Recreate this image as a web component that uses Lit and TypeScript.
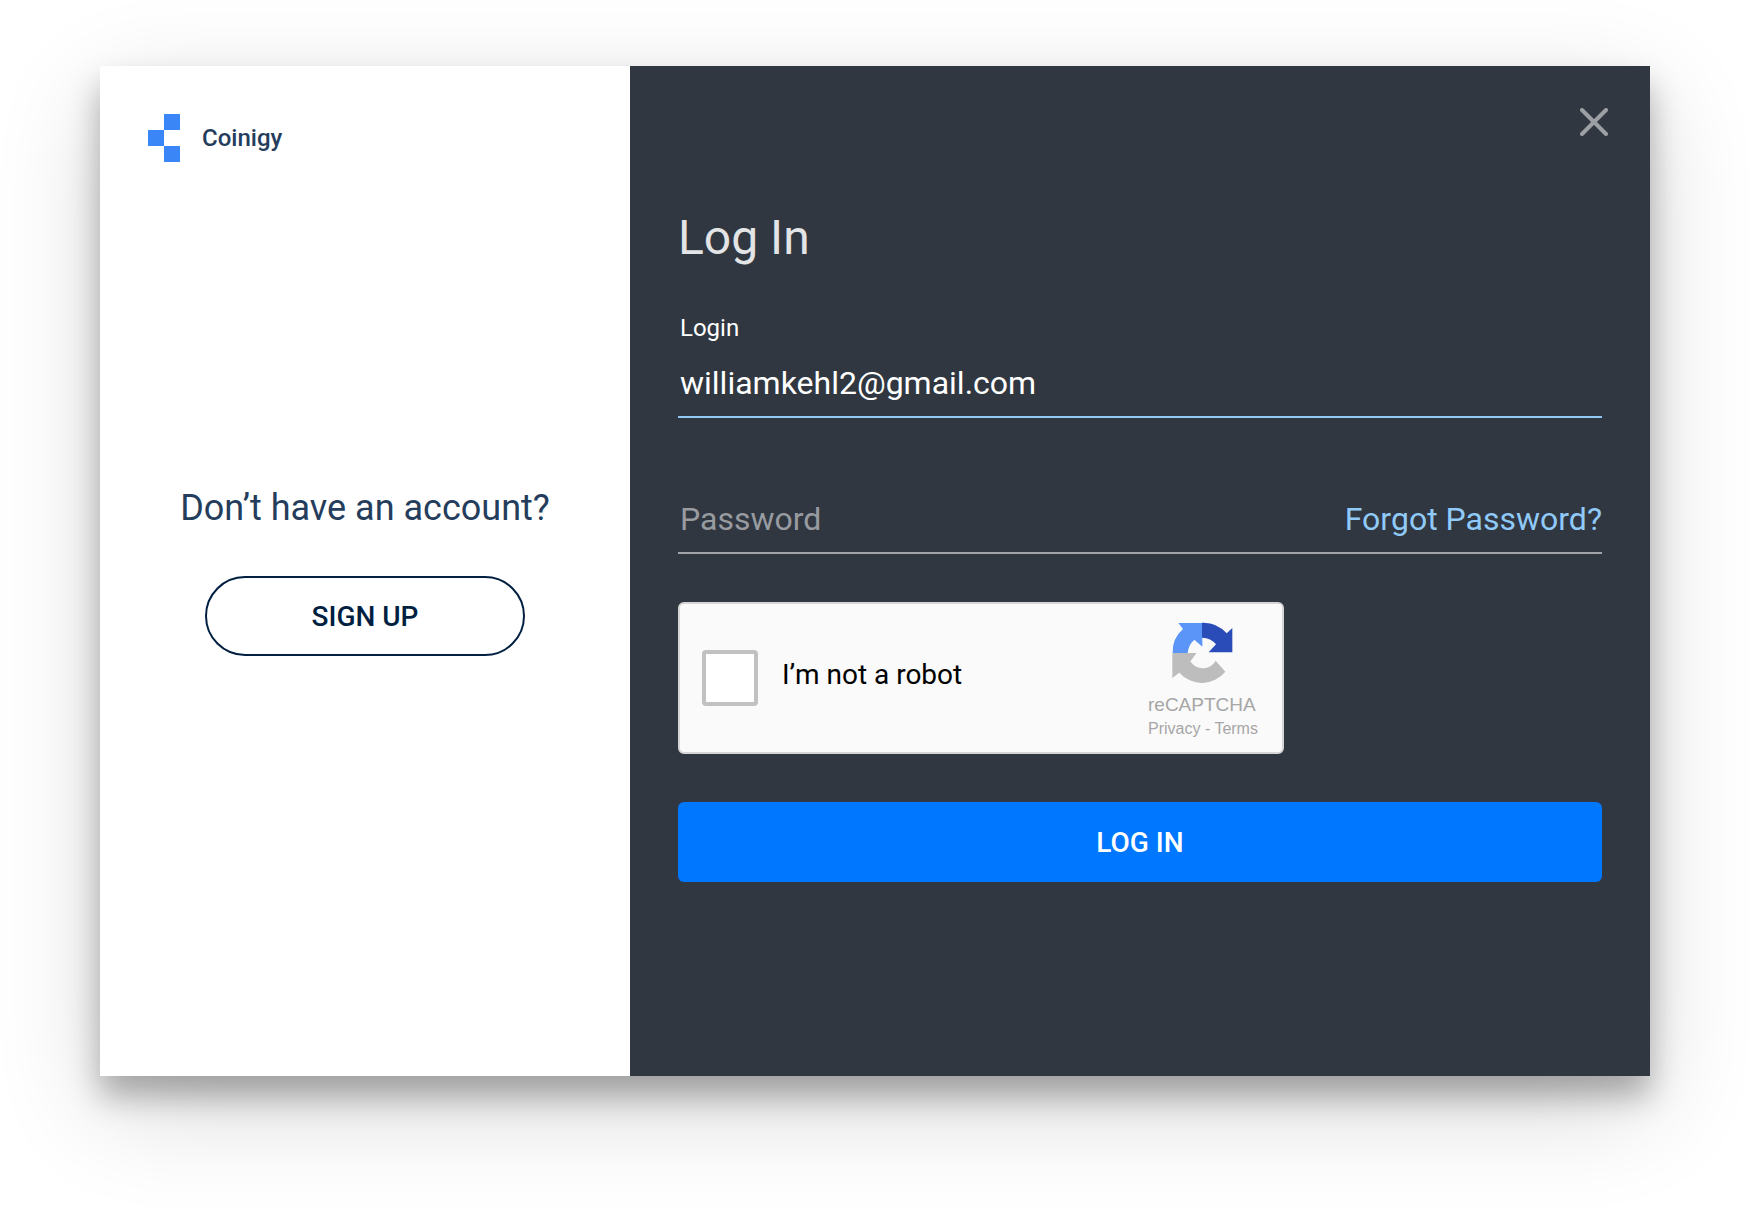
import { LitElement, html, css } from "lit";
import { customElement } from "lit/decorators.js";

@customElement("app-root")
export class AppRoot extends LitElement {
  static styles = css`
    :host {
      display: block;
      font-family: Roboto, "Liberation Sans", sans-serif;
      color: #fff;
    }
    * {
      box-sizing: border-box;
    }
    h1,
    p {
      margin: 0;
      font-weight: 400;
    }
    button,
    input {
      margin: 0;
      font-family: inherit;
    }
    button {
      cursor: pointer;
    }
    .page {
      display: flex;
      min-height: 100vh;
      padding: 66px 100px 134px;
      background: #fff;
      overflow: hidden;
    }
    .dialog {
      flex: 1;
      display: grid;
      grid-template-columns: 530fr 1020fr;
      box-shadow: 0 20px 30px rgba(0, 0, 0, 0.29),
        0 32px 100px rgba(0, 0, 0, 0.16);
    }
    .aside {
      display: grid;
      grid-template-rows: 1fr auto 1fr;
      padding: 48px;
      background: #fff;
    }
    .brand {
      display: flex;
      align-items: center;
      align-self: start;
      gap: 22px;
      font-size: 24px;
      line-height: 48px;
      font-weight: 500;
      color: #243d5c;
    }
    .mark {
      display: block;
      width: 32px;
      height: 48px;
    }
    .prompt {
      display: flex;
      flex-direction: column;
      align-items: center;
      gap: 46px;
    }
    .question {
      font-size: 36px;
      line-height: 44px;
      color: #243d5c;
      white-space: nowrap;
    }
    .signup {
      width: 320px;
      height: 80px;
      border: 2px solid #001f41;
      border-radius: 40px;
      background: transparent;
      font-size: 28px;
      font-weight: 500;
      color: #001f41;
    }
    .main {
      display: flex;
      flex-direction: column;
      background: #303741;
    }
    .bar {
      display: flex;
      justify-content: flex-end;
      padding: 32px 32px 0;
    }
    .close {
      display: grid;
      place-items: center;
      width: 48px;
      height: 48px;
      padding: 0;
      border: 0;
      background: transparent;
    }
    .close-icon {
      display: block;
      width: 28px;
      height: 28px;
    }
    .form {
      display: flex;
      flex-direction: column;
      padding: 64px 48px;
    }
    .title {
      margin-bottom: 48px;
      font-size: 48px;
      line-height: 56px;
      color: #e3e4e5;
    }
    .label {
      padding-left: 2px;
      font-size: 24px;
      line-height: 28px;
    }
    .field {
      display: flex;
      align-items: center;
      padding: 22px 0 14px;
      border-bottom: 2px solid #a0a3a7;
      font-size: 32px;
      line-height: 38px;
    }
    .field.active {
      margin-bottom: 60px;
      border-color: #90caf4;
    }
    .input {
      flex: 1;
      min-width: 0;
      height: 38px;
      padding: 0 2px;
      border: 0;
      outline: 0;
      background: transparent;
      font-size: 32px;
      color: #fff;
    }
    .input::placeholder {
      color: #989ba0;
      opacity: 1;
    }
    .forgot {
      color: #90caf9;
      text-decoration: none;
      white-space: nowrap;
    }
    .captcha {
      display: flex;
      align-items: center;
      width: 606px;
      max-width: 100%;
      height: 152px;
      margin: 48px 0;
      padding: 0 22px;
      border: 2px solid #d6d6d6;
      border-radius: 6px;
      background: #fafafa;
    }
    .check {
      appearance: none;
      width: 56px;
      height: 56px;
      margin: 0;
      border: 4px solid #c1c1c1;
      border-radius: 4px;
      background: #fff;
    }
    .robot {
      flex: 1;
      padding: 0 0 6px 24px;
      font-size: 28px;
      line-height: 34px;
      color: #000;
    }
    .badge {
      display: flex;
      flex-direction: column;
      width: 112px;
      padding-top: 6px;
      font-family: "Liberation Sans", Arial, sans-serif;
      font-size: 16px;
      line-height: 24px;
      color: #a6a6a6;
    }
    .badge-logo {
      display: block;
      width: 61px;
      height: 61px;
      margin: 0 0 10px 24px;
    }
    .badge-name {
      font-size: 19px;
    }
    .badge-link {
      color: inherit;
      text-decoration: none;
    }
    .submit {
      height: 80px;
      border: 0;
      border-radius: 6px;
      background: #0077ff;
      font-size: 28px;
      font-weight: 500;
      color: #fff;
    }
  `;

  render() {
    return html`
      <div class="page">
        <div class="dialog" role="dialog" aria-labelledby="title">
          <section class="aside">
            <div class="brand">
              <svg class="mark" viewBox="0 0 32 48" fill="#3a86f7" aria-hidden="true">
                <path d="M16 0h16v16H16zM0 16h16v16H0zM16 32h16v16H16z" />
              </svg>
              <span>Coinigy</span>
            </div>
            <div class="prompt">
              <p class="question">Don’t have an account?</p>
              <button class="signup" type="button">SIGN UP</button>
            </div>
          </section>
          <section class="main">
            <div class="bar">
              <button class="close" type="button" aria-label="Close">
                <svg class="close-icon" viewBox="0 0 28 28" fill="none"
                  stroke="#9c9fa4" stroke-width="4" stroke-linecap="round" aria-hidden="true">
                  <path d="M2 2l24 24M26 2L2 26" />
                </svg>
              </button>
            </div>
            <form class="form" @submit=${(e: Event) => e.preventDefault()}>
              <h1 class="title" id="title">Log In</h1>
              <label class="label" for="login">Login</label>
              <div class="field active">
                <input class="input" id="login" type="text" value="williamkehl2@gmail.com"
                  autocomplete="username" spellcheck="false" />
              </div>
              <div class="field">
                <input class="input" type="password" placeholder="Password"
                  aria-label="Password" autocomplete="current-password" />
                <a class="forgot" href="#forgot">Forgot Password?</a>
              </div>
              <div class="captcha">
                <input class="check" id="robot" type="checkbox" />
                <label class="robot" for="robot">I’m not a robot</label>
                <div class="badge">
                  <svg class="badge-logo" viewBox="126 99 183 183" aria-hidden="true">
                    <path fill="#bdbdbd"
                      d="M127 192H200L181 217A44 44 0 0 0 257 215L286 248A90 90 0 0 1 148 251L127 267Z" />
                    <path fill="#5a95f7"
                      d="M128 192A90 90 0 0 1 159 120L145 102H217V173L193 152Q175 168 173 192Z" />
                    <path fill="#2a4cb8"
                      d="M216 101A92 92 0 0 1 290 133L307 117V190H236L258 166Q243 147 216 146Z" />
                  </svg>
                  <span class="badge-name">reCAPTCHA</span>
                  <span>
                    <a class="badge-link" href="#privacy">Privacy</a> -
                    <a class="badge-link" href="#terms">Terms</a>
                  </span>
                </div>
              </div>
              <button class="submit" type="submit">LOG IN</button>
            </form>
          </section>
        </div>
      </div>
    `;
  }
}
